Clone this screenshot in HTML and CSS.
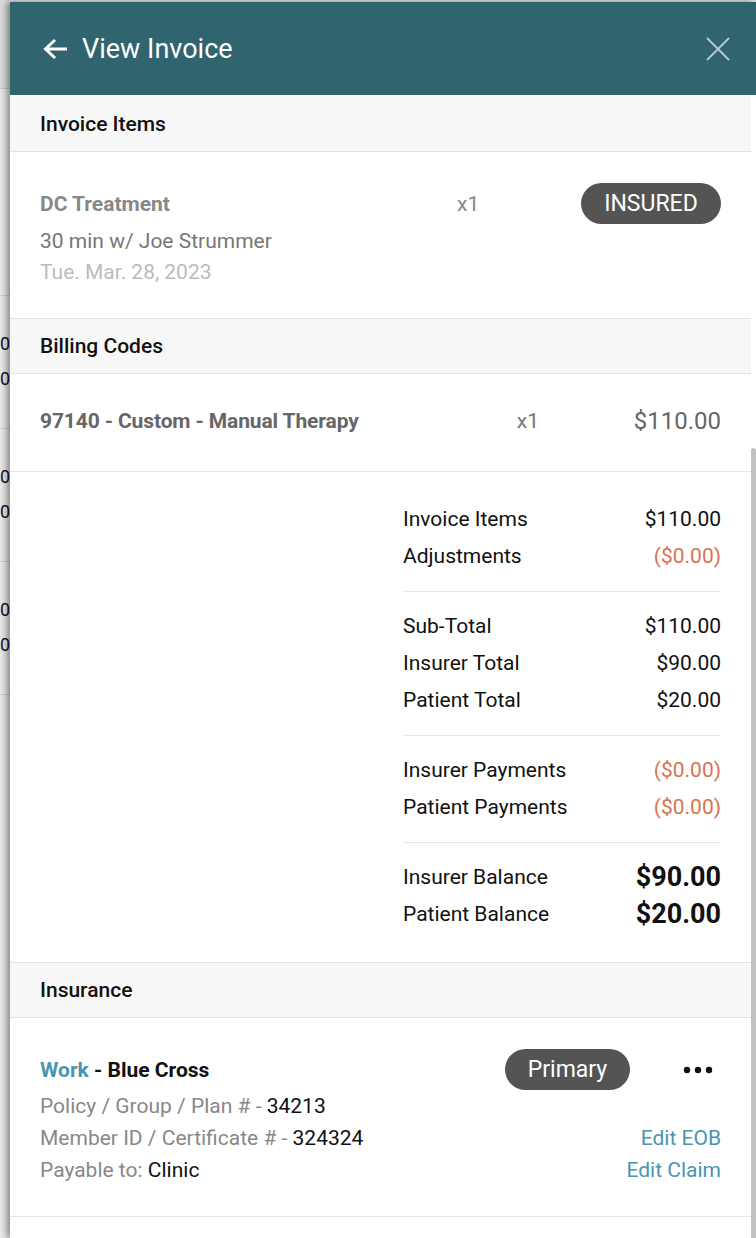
FILE: index.html
```html
<!DOCTYPE html>
<html lang="en">
<head>
<meta charset="utf-8">
<title>View Invoice</title>
<link rel="stylesheet" href="styles.css">
</head>
<body>
<div class="page">
  <div class="backdrop">
    <div class="bd-top"></div>
    <div class="bd-gap"></div>
    <div class="bd-block"><span>0</span><span>0</span></div>
    <div class="bd-block"><span>0</span><span>0</span></div>
    <div class="bd-block"><span>0</span><span>0</span></div>
  </div>
  <div class="panel">
    <header class="head">
      <svg class="back" width="26" height="22" viewBox="0 0 26 22" aria-hidden="true">
        <path d="M2.5 11H24M12 2L2.5 11L12 20" fill="none" stroke="#fff" stroke-width="3" stroke-linecap="butt" stroke-linejoin="miter"/>
      </svg>
      <h1 class="title">View Invoice</h1>
      <svg class="close" width="24" height="24" viewBox="0 0 24 24" aria-hidden="true">
        <path d="M1 1L23 23M23 1L1 23" fill="none" stroke="#b7c8cc" stroke-width="2"/>
      </svg>
    </header>
    <div class="body">
      <main class="main">
        <div class="sec-head first">Invoice Items</div>
        <div class="item">
          <div class="item-info">
            <div class="item-name">DC Treatment</div>
            <div class="item-sub">30 min w/ Joe Strummer</div>
            <div class="item-date">Tue. Mar. 28, 2023</div>
          </div>
          <div class="item-qty">x1</div>
          <div class="pill insured">INSURED</div>
        </div>

        <div class="sec-head">Billing Codes</div>
        <div class="code">
          <div class="code-name">97140 - Custom - Manual Therapy</div>
          <div class="code-qty">x1</div>
          <div class="code-price">$110.00</div>
        </div>

        <div class="totals">
          <div class="group">
            <div class="trow"><span>Invoice Items</span><span>$110.00</span></div>
            <div class="trow"><span>Adjustments</span><span class="neg">($0.00)</span></div>
          </div>
          <div class="group">
            <div class="trow"><span>Sub-Total</span><span>$110.00</span></div>
            <div class="trow"><span>Insurer Total</span><span>$90.00</span></div>
            <div class="trow"><span>Patient Total</span><span>$20.00</span></div>
          </div>
          <div class="group">
            <div class="trow"><span>Insurer Payments</span><span class="neg">($0.00)</span></div>
            <div class="trow"><span>Patient Payments</span><span class="neg">($0.00)</span></div>
          </div>
          <div class="group last">
            <div class="trow"><span>Insurer Balance</span><span class="big">$90.00</span></div>
            <div class="trow"><span>Patient Balance</span><span class="big">$20.00</span></div>
          </div>
        </div>

        <div class="sec-head">Insurance</div>
        <div class="ins">
          <div class="ins-top">
            <div class="ins-name"><span class="work">Work</span> - Blue Cross</div>
            <div class="pill primary">Primary</div>
            <svg class="dots" width="30" height="8" viewBox="0 0 30 8" aria-hidden="true">
              <circle cx="4" cy="4" r="3.2" fill="#111"/>
              <circle cx="15" cy="4" r="3.2" fill="#111"/>
              <circle cx="26" cy="4" r="3.2" fill="#111"/>
            </svg>
          </div>
          <div class="ins-grid">
            <div class="ins-line"><span class="muted">Policy / Group / Plan # - </span>34213</div>
            <div class="ins-link"></div>
            <div class="ins-line"><span class="muted">Member ID / Certificate # - </span>324324</div>
            <a class="ins-link" href="#">Edit EOB</a>
            <div class="ins-line"><span class="muted">Payable to: </span>Clinic</div>
            <a class="ins-link" href="#">Edit Claim</a>
          </div>
        </div>
      </main>
      <div class="track"><div class="thumb"></div></div>
    </div>
  </div>
</div>
</body>
</html>
```

FILE: styles.css
```css
* { box-sizing: border-box; }
html, body { margin: 0; padding: 0; }
body {
  background: #e2e2e2;
  font-family: Roboto, "Liberation Sans", Arial, sans-serif;
  color: #111;
  -webkit-font-smoothing: antialiased;
}
.page {
  display: flex;
  width: 756px;
  height: 1238px;
  overflow: hidden;
}

/* backdrop page peeking out on the left */
.backdrop {
  width: 10px;
  flex: none;
  background: #e9e9e9;
  font-size: 18px;
}
.bd-top { height: 89px; background: #dcdcdc; border-bottom: 1px solid #c9c9c9; }
.bd-gap { height: 207px; border-bottom: 1px solid #cfcfcf; }
.bd-block {
  height: 133px;
  padding-top: 30px;
  border-bottom: 1px solid #cfcfcf;
  display: flex;
  flex-direction: column;
  align-items: flex-start;
}
.bd-block span { line-height: 35px; white-space: nowrap; }

/* panel */
.panel {
  flex: 1;
  margin-top: 2px;
  background: #fff;
  display: flex;
  flex-direction: column;
  box-shadow: -3px 0 7px rgba(0, 0, 0, 0.45);
  position: relative;
  z-index: 1;
}
.head {
  height: 93px;
  flex: none;
  background: #30646f;
  display: flex;
  align-items: center;
  padding: 0 26px 0 33px;
}
.title {
  margin: 0 0 0 13px;
  font-size: 27px;
  font-weight: 400;
  color: #fff;
  flex: 1;
}
.close { margin-top: 1px; }

.body {
  flex: 1;
  display: flex;
  padding-top: 1px;
}
.main { flex: 1; }
.track { width: 5px; flex: none; }
.thumb {
  margin-top: 352px;
  height: 800px;
  background: #c1c1c1;
  border-radius: 3px 3px 0 0;
}

.sec-head {
  height: 56px;
  background: #f7f7f7;
  border-top: 1px solid #e3e3e3;
  border-bottom: 1px solid #e3e3e3;
  padding: 0 30px;
  display: flex;
  align-items: center;
  font-size: 21px;
  font-weight: 500;
  color: #111;
}
.sec-head.first { border-top: none; height: 56px; padding-top: 1px; }

/* invoice item */
.item {
  display: grid;
  grid-template-columns: 1fr 124px 140px;
  align-items: start;
  padding: 35px 30px 31px;
}
.item-name { font-size: 21px; font-weight: 700; color: #888; line-height: 34px; margin-bottom: 4px; }
.item-sub { font-size: 21px; color: #777; line-height: 32px; }
.item-date { font-size: 21px; color: #bcbcbc; line-height: 30px; }
.item-qty { font-size: 21px; color: #888; line-height: 34px; }
.pill {
  background: #545454;
  color: #fff;
  border-radius: 21px;
  height: 41px;
  display: flex;
  align-items: center;
  justify-content: center;
  font-size: 23px;
}
.insured { margin-top: -4px; }

/* billing code */
.code {
  display: grid;
  grid-template-columns: 1fr 117px auto;
  align-items: center;
  height: 98px;
  padding: 0 30px 4px;
  border-bottom: 1px solid #e4e7ea;
}
.code-name { font-size: 21px; font-weight: 700; color: #666; letter-spacing: -0.12px; }
.code-qty { font-size: 21px; color: #777; }
.code-price { font-size: 24px; color: #666; }

/* totals */
.totals { padding: 13px 30px 13px 393px; }
.group { padding: 15px 0 17px; border-bottom: 1px solid #e6e6e6; }
.group.last { border-bottom: none; }
.trow {
  display: flex;
  justify-content: space-between;
  align-items: center;
  height: 37px;
  font-size: 21px;
  color: #111;
}
.neg { color: #d8734f; }
.big { font-size: 27px; font-weight: 700; }

/* insurance */
.ins {
  padding: 31px 30px 30px;
  border-bottom: 1px solid #e4e7ea;
}
.ins-top { display: flex; align-items: center; height: 41px; }
.ins-name { flex: 1; font-size: 21px; font-weight: 700; color: #111; }
.work { color: #4b94b1; }
.primary { width: 125px; }
.dots { margin: 0 8px 0 53px; }
.ins-grid {
  display: grid;
  grid-template-columns: 1fr auto;
  margin-top: 0;
}
.ins-line, .ins-link { font-size: 21px; line-height: 32px; height: 32px; }
.muted { color: #888; }
.ins-link { color: #4b94b1; text-decoration: none; text-align: right; }
```
